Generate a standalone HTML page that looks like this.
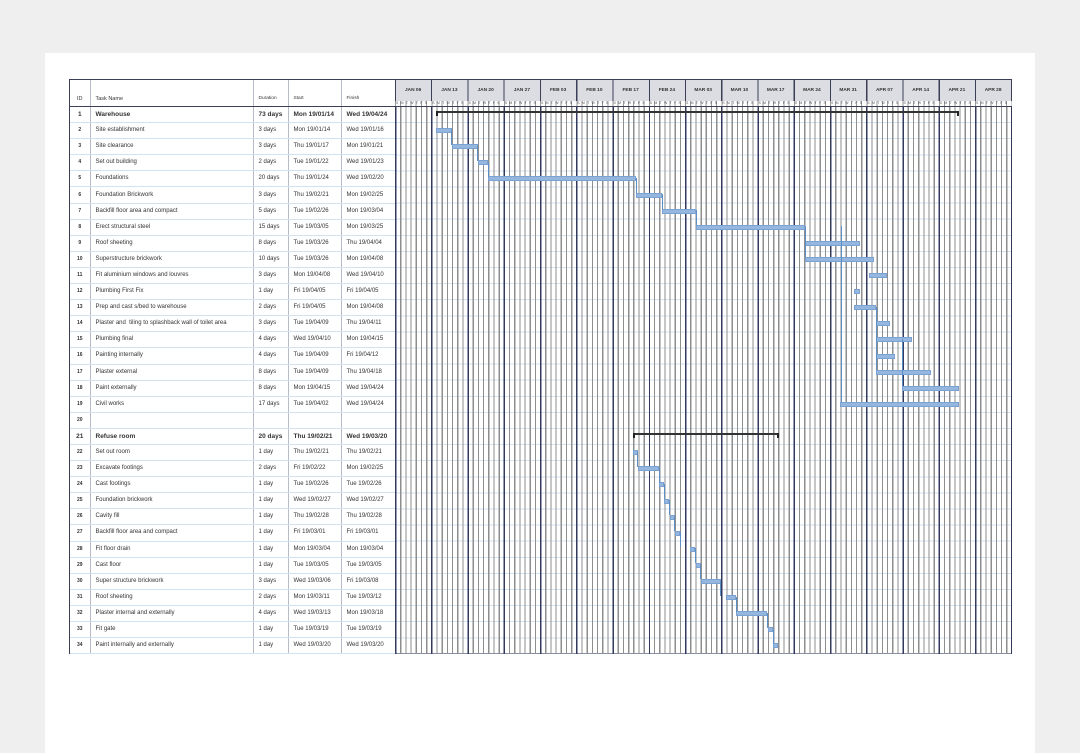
<!DOCTYPE html>
<html><head><meta charset="utf-8"><style>
body{margin:0;width:1080px;height:753px;background:#efefef;font-family:"Liberation Sans",sans-serif;overflow:hidden;position:relative}
.card{position:absolute;left:45px;top:53px;width:990px;height:700px;background:#fff}
.wrap{position:absolute;left:69px;top:79px;width:943px;height:575px;border:1px solid #3a3f55;box-sizing:border-box;background:#fff}
table{position:absolute;left:0;top:0;border-collapse:collapse;table-layout:fixed;font-size:6px;color:#333}
td{height:15.1px;border-bottom:1px solid #d3e2ef;border-right:1px solid #b8bcc8;padding:0 0 0 5px;white-space:nowrap;overflow:hidden;line-height:15px}
td:first-child{padding:0;text-align:center;font-weight:bold;font-size:5px}
tr.h td{height:26px;vertical-align:bottom;line-height:14px;font-size:5.5px;border-bottom:1px solid #3a3f55}
tr.b td{font-weight:bold;font-size:6.5px}
.chart{position:absolute;left:325px;top:0;width:617px;height:573px}
.months{position:absolute;left:0;top:0;width:617px;height:21px;background:#dcdde3;
 background-image:repeating-linear-gradient(to right,#3a3f55 0 1px,transparent 1px 36.25px);display:flex}
.months div{width:36.25px;flex:none;text-align:center;font-size:4.8px;font-weight:bold;color:#333;line-height:21px}
.days{position:absolute;left:0;top:21px;width:617px;height:5px;background:#fff;border-bottom:1px solid #3a3f55;display:flex;
 background-image:repeating-linear-gradient(to right,#999 0 1px,transparent 1px 5.179px)}
.days div{width:36.25px;flex:none;font-size:3.5px;letter-spacing:2.3px;color:#555;line-height:5px;padding-left:1px;box-sizing:border-box;overflow:hidden}
.grid{position:absolute;left:0;top:27px;width:617px;height:547px;
 background-image:repeating-linear-gradient(to right,#333a5c 0 1.3px,transparent 1.3px 36.25px),repeating-linear-gradient(to right,#8e8e8e 0 1.2px,transparent 1.2px 5.179px),repeating-linear-gradient(to bottom,transparent 0 15.1px,#d3e2ef 15.1px 16.1px)}
.bar{position:absolute;height:5px;background:#94b7e0;border:1px solid #7ba2d2;box-sizing:border-box}
.sum{position:absolute;height:2px;background:#333}
.sum:before,.sum:after{content:"";position:absolute;top:0;width:2px;height:5px;background:#222}
.sum:before{left:0}.sum:after{right:0}
.c{position:absolute;width:1px;background:#5d8ec6}
</style></head><body>
<div class="card"></div>
<div class="wrap">
<table>
<colgroup><col style="width:20px"><col style="width:163px"><col style="width:35px"><col style="width:53px"><col style="width:54px"></colgroup>
<tr class="h"><td style="font-weight:normal">ID</td><td>Task Name</td><td style="font-size:4.8px">Duration</td><td style="font-size:4.8px">Start</td><td style="font-size:4.8px">Finish</td></tr>
<tr class="b"><td>1</td><td>Warehouse</td><td>73 days</td><td>Mon 19/01/14</td><td>Wed 19/04/24</td></tr>
<tr><td>2</td><td>Site establishment</td><td>3 days</td><td>Mon 19/01/14</td><td>Wed 19/01/16</td></tr>
<tr><td>3</td><td>Site clearance</td><td>3 days</td><td>Thu 19/01/17</td><td>Mon 19/01/21</td></tr>
<tr><td>4</td><td>Set out building</td><td>2 days</td><td>Tue 19/01/22</td><td>Wed 19/01/23</td></tr>
<tr><td>5</td><td>Foundations</td><td>20 days</td><td>Thu 19/01/24</td><td>Wed 19/02/20</td></tr>
<tr><td>6</td><td>Foundation Brickwork</td><td>3 days</td><td>Thu 19/02/21</td><td>Mon 19/02/25</td></tr>
<tr><td>7</td><td>Backfill floor area and compact</td><td>5 days</td><td>Tue 19/02/26</td><td>Mon 19/03/04</td></tr>
<tr><td>8</td><td>Erect structural steel</td><td>15 days</td><td>Tue 19/03/05</td><td>Mon 19/03/25</td></tr>
<tr><td>9</td><td>Roof sheeting</td><td>8 days</td><td>Tue 19/03/26</td><td>Thu 19/04/04</td></tr>
<tr><td>10</td><td>Superstructure brickwork</td><td>10 days</td><td>Tue 19/03/26</td><td>Mon 19/04/08</td></tr>
<tr><td>11</td><td>Fit aluminium windows and louvres</td><td>3 days</td><td>Mon 19/04/08</td><td>Wed 19/04/10</td></tr>
<tr><td>12</td><td>Plumbing First Fix</td><td>1 day</td><td>Fri 19/04/05</td><td>Fri 19/04/05</td></tr>
<tr><td>13</td><td>Prep and cast s/bed to warehouse</td><td>2 days</td><td>Fri 19/04/05</td><td>Mon 19/04/08</td></tr>
<tr><td>14</td><td>Plaster and&nbsp; tiling to splashback wall of toilet area</td><td>3 days</td><td>Tue 19/04/09</td><td>Thu 19/04/11</td></tr>
<tr><td>15</td><td>Plumbing final</td><td>4 days</td><td>Wed 19/04/10</td><td>Mon 19/04/15</td></tr>
<tr><td>16</td><td>Painting internally</td><td>4 days</td><td>Tue 19/04/09</td><td>Fri 19/04/12</td></tr>
<tr><td>17</td><td>Plaster external</td><td>8 days</td><td>Tue 19/04/09</td><td>Thu 19/04/18</td></tr>
<tr><td>18</td><td>Paint externally</td><td>8 days</td><td>Mon 19/04/15</td><td>Wed 19/04/24</td></tr>
<tr><td>19</td><td>Civil works</td><td>17 days</td><td>Tue 19/04/02</td><td>Wed 19/04/24</td></tr>
<tr><td>20</td><td></td><td></td><td></td><td></td></tr>
<tr class="b"><td>21</td><td>Refuse room</td><td>20 days</td><td>Thu 19/02/21</td><td>Wed 19/03/20</td></tr>
<tr><td>22</td><td>Set out room</td><td>1 day</td><td>Thu 19/02/21</td><td>Thu 19/02/21</td></tr>
<tr><td>23</td><td>Excavate footings</td><td>2 days</td><td>Fri 19/02/22</td><td>Mon 19/02/25</td></tr>
<tr><td>24</td><td>Cast footings</td><td>1 day</td><td>Tue 19/02/26</td><td>Tue 19/02/26</td></tr>
<tr><td>25</td><td>Foundation brickwork</td><td>1 day</td><td>Wed 19/02/27</td><td>Wed 19/02/27</td></tr>
<tr><td>26</td><td>Cavity fill</td><td>1 day</td><td>Thu 19/02/28</td><td>Thu 19/02/28</td></tr>
<tr><td>27</td><td>Backfill floor area and compact</td><td>1 day</td><td>Fri 19/03/01</td><td>Fri 19/03/01</td></tr>
<tr><td>28</td><td>Fit floor drain</td><td>1 day</td><td>Mon 19/03/04</td><td>Mon 19/03/04</td></tr>
<tr><td>29</td><td>Cast floor</td><td>1 day</td><td>Tue 19/03/05</td><td>Tue 19/03/05</td></tr>
<tr><td>30</td><td>Super structure brickwork</td><td>3 days</td><td>Wed 19/03/06</td><td>Fri 19/03/08</td></tr>
<tr><td>31</td><td>Roof sheeting</td><td>2 days</td><td>Mon 19/03/11</td><td>Tue 19/03/12</td></tr>
<tr><td>32</td><td>Plaster internal and externally</td><td>4 days</td><td>Wed 19/03/13</td><td>Mon 19/03/18</td></tr>
<tr><td>33</td><td>Fit gate</td><td>1 day</td><td>Tue 19/03/19</td><td>Tue 19/03/19</td></tr>
<tr><td>34</td><td>Paint internally and externally</td><td>1 day</td><td>Wed 19/03/20</td><td>Wed 19/03/20</td></tr>
</table>
<div class="chart">
<div class="months"><div>JAN 06</div><div>JAN 13</div><div>JAN 20</div><div>JAN 27</div><div>FEB 03</div><div>FEB 10</div><div>FEB 17</div><div>FEB 24</div><div>MAR 03</div><div>MAR 10</div><div>MAR 17</div><div>MAR 24</div><div>MAR 31</div><div>APR 07</div><div>APR 14</div><div>APR 21</div><div>APR 28</div></div>
<div class="days"><div>SMTWTFS</div><div>SMTWTFS</div><div>SMTWTFS</div><div>SMTWTFS</div><div>SMTWTFS</div><div>SMTWTFS</div><div>SMTWTFS</div><div>SMTWTFS</div><div>SMTWTFS</div><div>SMTWTFS</div><div>SMTWTFS</div><div>SMTWTFS</div><div>SMTWTFS</div><div>SMTWTFS</div><div>SMTWTFS</div><div>SMTWTFS</div><div>SMTWTFS</div></div>
<div class="grid">
<div class="sum" style="left:41.4px;top:4px;width:523px"></div>
<div class="bar" style="left:41.4px;top:21px;width:15.5px"></div>
<div class="bar" style="left:57px;top:37px;width:26px"></div>
<div class="bar" style="left:83px;top:53px;width:10.4px"></div>
<div class="bar" style="left:93.2px;top:69px;width:148px"></div>
<div class="bar" style="left:241px;top:85.5px;width:26px"></div>
<div class="bar" style="left:267px;top:101.5px;width:34px"></div>
<div class="bar" style="left:301px;top:117.5px;width:109px"></div>
<div class="bar" style="left:410px;top:133.5px;width:55px"></div>
<div class="bar" style="left:410px;top:149.5px;width:69px"></div>
<div class="bar" style="left:474px;top:166px;width:18px"></div>
<div class="bar" style="left:459px;top:182px;width:5.5px"></div>
<div class="bar" style="left:459px;top:198px;width:22px"></div>
<div class="bar" style="left:481px;top:214px;width:14px"></div>
<div class="bar" style="left:481px;top:230px;width:36px"></div>
<div class="bar" style="left:481px;top:246.5px;width:19px"></div>
<div class="bar" style="left:481px;top:262.5px;width:55px"></div>
<div class="bar" style="left:507px;top:278.5px;width:57px"></div>
<div class="bar" style="left:445px;top:294.5px;width:119px"></div>
<div class="sum" style="left:238px;top:326px;width:146px"></div>
<div class="bar" style="left:238px;top:343px;width:5.2px"></div>
<div class="bar" style="left:243px;top:359px;width:21px"></div>
<div class="bar" style="left:264px;top:375px;width:5.2px"></div>
<div class="bar" style="left:269px;top:391.5px;width:5.2px"></div>
<div class="bar" style="left:274.5px;top:407.5px;width:5.2px"></div>
<div class="bar" style="left:279.7px;top:423.5px;width:5.2px"></div>
<div class="bar" style="left:295px;top:439.5px;width:5.2px"></div>
<div class="bar" style="left:300.5px;top:455.8px;width:5.2px"></div>
<div class="bar" style="left:305.6px;top:472px;width:20px"></div>
<div class="bar" style="left:331px;top:488px;width:10.4px"></div>
<div class="bar" style="left:341.4px;top:504px;width:31px"></div>
<div class="bar" style="left:372.5px;top:520px;width:5.2px"></div>
<div class="bar" style="left:378px;top:536px;width:5.2px"></div>
<div class="c" style="left:56px;top:23px;height:15px"></div>
<div class="c" style="left:82px;top:39px;height:15px"></div>
<div class="c" style="left:92.5px;top:55px;height:15px"></div>
<div class="c" style="left:240.5px;top:71px;height:15px"></div>
<div class="c" style="left:266.5px;top:87px;height:15px"></div>
<div class="c" style="left:300.5px;top:103px;height:15px"></div>
<div class="c" style="left:409.5px;top:119px;height:31px"></div>
<div class="c" style="left:446px;top:119px;height:176px"></div>
<div class="c" style="left:480.5px;top:200px;height:63px"></div>
<div class="c" style="left:506.5px;top:232px;height:47px"></div>
<div class="c" style="left:242px;top:345px;height:15px"></div>
<div class="c" style="left:263.5px;top:361px;height:15px"></div>
<div class="c" style="left:268.5px;top:377px;height:15px"></div>
<div class="c" style="left:274px;top:393px;height:15px"></div>
<div class="c" style="left:279px;top:409px;height:15px"></div>
<div class="c" style="left:284.5px;top:425px;height:15px"></div>
<div class="c" style="left:300px;top:441px;height:15px"></div>
<div class="c" style="left:305px;top:457px;height:15px"></div>
<div class="c" style="left:325px;top:474px;height:15px"></div>
<div class="c" style="left:341px;top:490px;height:15px"></div>
<div class="c" style="left:372px;top:506px;height:15px"></div>
<div class="c" style="left:377.5px;top:522px;height:15px"></div>
</div>
</div>
</div>
</body></html>
